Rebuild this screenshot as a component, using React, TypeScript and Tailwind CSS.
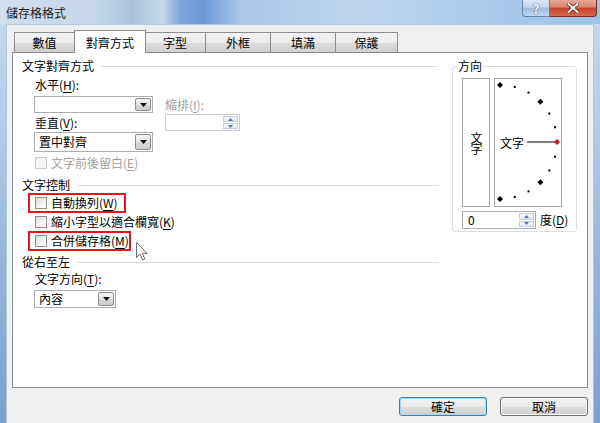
import React from 'react'

function DropBtn() {
    return (
        <div className="w-[16px] m-px border border-[#8d8d8d] rounded-[2px] bg-[linear-gradient(#f4f4f4,#e6e6e6_50%,#d6d6d6_51%,#cfcfcf)] flex items-center justify-center">
            <svg width="7" height="4" viewBox="0 0 7 4">
                <path d="M0 0h7L3.5 4z" fill="#111" />
            </svg>
        </div>
    )
}

function Select({ className, value }: { className: string; value?: string }) {
    return (
        <div className={`flex border border-[#abadb3] bg-white ${className}`}>
            <div className="flex-1 pl-[4px] flex items-center">{value}</div>
            <DropBtn />
        </div>
    )
}

function Spin({ className, value, disabled }: { className: string; value?: string; disabled?: boolean }) {
    return (
        <div className={`flex border bg-white ${disabled ? 'border-[#c9ccd3]' : 'border-[#abadb3]'} ${className}`}>
            <div className="flex-1 pl-[5px] flex items-center">{value}</div>
            <div className="w-[15px] m-px flex flex-col gap-px">
                <div className="flex-1 border border-[#c8cfda] bg-[linear-gradient(#f7f9fc,#e3e9f1)] flex items-center justify-center">
                    <svg width="5" height="3" viewBox="0 0 5 3">
                        <path d="M0 3h5L2.5 0z" fill="#4f78b8" />
                    </svg>
                </div>
                <div className="flex-1 border border-[#c8cfda] bg-[linear-gradient(#f7f9fc,#e3e9f1)] flex items-center justify-center">
                    <svg width="5" height="3" viewBox="0 0 5 3">
                        <path d="M0 0h5L2.5 3z" fill="#4f78b8" />
                    </svg>
                </div>
            </div>
        </div>
    )
}

function Check({ disabled }: { disabled?: boolean }) {
    return (
        <span
            className={`w-[12px] h-[12px] shrink-0 border ${
                disabled
                    ? 'border-[#c9c9c9] bg-[#f4f4f4]'
                    : 'border-[#8e8f8f] bg-[linear-gradient(135deg,#d8d8d8,#f4f4f4_60%,#ffffff)]'
            }`}
        />
    )
}

function Header({ text, className }: { text: string; className: string }) {
    return (
        <div className={`flex items-center gap-[7px] h-[14px] ${className}`}>
            <span>{text}</span>
            <div className="flex-1 h-px bg-[#d5dfe5]" />
        </div>
    )
}

function U({ c }: { c: string }) {
    return <span className="underline underline-offset-2">{c}</span>
}

function Dial() {
    // semicircle of dots, center at left edge of the box
    const cx = 5
    const cy = 63
    const r = 57
    const dots = []
    for (let a = 90; a >= -90; a -= 15) {
        const rad = (a * Math.PI) / 180
        const x = cx + r * Math.cos(rad)
        const y = cy - r * Math.sin(rad)
        if (a === 0) {
            dots.push(<path key={a} d={`M${x} ${y - 3}l3 3l-3 3l-3-3z`} fill="#d01010" />)
        } else if (a % 45 === 0) {
            dots.push(<path key={a} d={`M${x} ${y - 3}l3 3l-3 3l-3-3z`} fill="#000" />)
        } else {
            dots.push(<rect key={a} x={x - 1} y={y - 1} width="2" height="2" fill="#000" />)
        }
    }
    return (
        <svg className="absolute inset-0" width="66" height="127" viewBox="0 0 66 127">
            <line x1="32" y1="63" x2="61" y2="63" stroke="#000" strokeWidth="1" />
            {dots}
        </svg>
    )
}

export default function App() {
    const tabs = ['數值', '對齊方式', '字型', '外框', '填滿', '保護']
    const widths = ['w-[61px]', 'w-[72px]', 'w-[61px]', 'w-[65px]', 'w-[65px]', 'w-[62px]']

    return (
        <div className="w-[600px] h-[423px] relative overflow-hidden flex flex-col bg-[linear-gradient(180deg,#cddcec,#a8c4e4_40%,#86aad6_80%,#7aa0d0)] font-['Noto_Sans_CJK_TC',sans-serif] text-[12px] leading-[14px] text-black">
            {/* Title bar */}
            <div className="h-[24px] flex items-start bg-[linear-gradient(90deg,#d2dfec_0%,#c6d7e9_16%,#a9c2df_22%,#c7d9ec_27%,#7da6d9_30%,#6c9ad6_34%,#a9c7ea_40%,#bcd5ee_60%,#a9cbec_80%,#9cc2e8_100%)]">
                <div className="pl-[6px] pt-[6px] text-[#1a1a1a]">儲存格格式</div>
                <div className="ml-auto mr-[3px] flex">
                    <div className="w-[28px] h-[17px] border border-t-0 border-[#6282a8] rounded-bl-[4px] bg-[linear-gradient(#dbe7f4,#c2d6ec_45%,#9fbde0_50%,#bcd6f0)] flex items-center justify-center">
                        <span className="text-[13px] leading-[13px] font-bold text-white [text-shadow:0_0_1px_#2a4a70,0_0_1px_#2a4a70]">?</span>
                    </div>
                    <div className="w-[47px] h-[17px] border border-t-0 border-l-0 border-[#7a2a20] rounded-br-[4px] bg-[linear-gradient(#e9a898,#d98471_45%,#c5432b_50%,#d46a4c)] flex items-center justify-center">
                        <svg width="12" height="10" viewBox="0 0 12 10">
                            <path d="M1.5 1l9 8M10.5 1l-9 8" stroke="#5a1a12" strokeWidth="3.6" strokeLinecap="square" />
                            <path d="M1.5 1l9 8M10.5 1l-9 8" stroke="#fff" strokeWidth="2" strokeLinecap="square" />
                        </svg>
                    </div>
                </div>
            </div>

            {/* Dialog body */}
            <div className="flex-1 mx-[6px] bg-[#f0f0f0] border-l border-t border-r border-[#b4c8de] px-[5px] pt-[5px] flex flex-col">
                {/* Tabs */}
                <div className="flex items-end pl-[2px] h-[22px]">
                    {tabs.map((t, i) =>
                        i === 1 ? (
                            <div
                                key={t}
                                className={`${widths[i]} h-[23px] -mb-px relative z-10 bg-white border border-b-0 border-[#898c95] -ml-px flex items-center justify-center pt-[1px]`}
                            >
                                {t}
                            </div>
                        ) : (
                            <div
                                key={t}
                                className={`${widths[i]} h-[20px] border-t border-r border-[#898c95] ${i === 0 ? 'border-l' : ''} ${i === 2 ? '-ml-px' : ''} bg-[linear-gradient(#f3f3f3,#ebebeb_50%,#dddddd_51%,#cfcfcf)] flex items-center justify-center`}
                            >
                                {t}
                            </div>
                        )
                    )}
                </div>

                {/* Panel */}
                <div className="h-[336px] border border-[#898c95] bg-white flex">
                    {/* Left column */}
                    <div className="w-[427px] pl-[9px] pr-[2px] pt-[6px] flex flex-col">
                        <Header text="文字對齊方式" className="" />
                        <div className="flex ml-[12px] mt-[5px]">
                            <div className="w-[119px] flex flex-col">
                                <div className="pl-[1px] h-[14px]">
                                    水平(<U c="H" />):
                                </div>
                                <Select className="mt-[4px] h-[17px] w-[119px]" />
                                <div className="pl-[1px] mt-[3px] h-[14px]">
                                    垂直(<U c="V" />):
                                </div>
                                <Select className="mt-[2px] h-[20px] w-[119px]" value="置中對齊" />
                            </div>
                            <div className="ml-[12px] pt-[20px] flex flex-col">
                                <div className="h-[14px] text-[#a0a0a0]">
                                    縮排(<U c="I" />):
                                </div>
                                <Spin className="mt-[2px] w-[75px] h-[17px]" disabled />
                            </div>
                        </div>
                        <div className="ml-[13px] mt-[4px] h-[14px] flex items-center gap-[4px] text-[#a0a0a0]">
                            <Check disabled />
                            <span>
                                文字前後留白(<U c="E" />)
                            </span>
                        </div>

                        <Header text="文字控制" className="mt-[8px]" />
                        <div className="ml-[6px] mt-[1px] flex flex-col">
                            <div className="w-[98px] h-[20px] border-2 border-[#e8141b] pl-[5px] flex items-center gap-[4px]">
                                <Check />
                                <span>
                                    自動換列(<U c="W" />)
                                </span>
                            </div>
                            <div className="h-[18px] border-2 border-transparent pl-[5px] flex items-center gap-[4px]">
                                <Check />
                                <span>
                                    縮小字型以適合欄寬(<U c="K" />)
                                </span>
                            </div>
                            <div className="w-[103px] h-[20px] border-2 border-[#e8141b] pl-[5px] flex items-center gap-[4px]">
                                <Check />
                                <span>
                                    合併儲存格(<U c="M" />)
                                </span>
                            </div>
                        </div>

                        <Header text="從右至左" className="mt-[4px]" />
                        <div className="ml-[13px] mt-[3px] h-[14px]">
                            文字方向(<U c="T" />):
                        </div>
                        <Select className="ml-[12px] mt-[4px] w-[82px] h-[18px]" value="內容" />
                    </div>

                    {/* Orientation group */}
                    <fieldset className="ml-[12px] mt-[6px] w-[125px] h-[173px] border border-[#d5dfe5] rounded-[3px]">
                        <legend className="ml-[4px] px-[1px] leading-[14px]">方向</legend>
                        <div className="flex gap-[4px] pl-[9px] mt-[5px]">
                            <div className="w-[28px] h-[129px] border border-[#a5a5a5] flex items-center justify-center">
                                <span className="[writing-mode:vertical-rl] leading-[14px] tracking-[-1px]">文字</span>
                            </div>
                            <div className="w-[68px] h-[129px] border border-[#a5a5a5] relative flex items-center pl-[5px]">
                                <Dial />
                                <span className="relative">文字</span>
                            </div>
                        </div>
                        <div className="flex items-center pl-[9px] mt-[4px]">
                            <Spin className="w-[74px] h-[18px]" value="0" />
                            <span className="ml-[4px]">
                                度(<U c="D" />)
                            </span>
                        </div>
                    </fieldset>
                </div>

                {/* Buttons */}
                <div className="flex justify-end gap-[13px] mt-[9px]">
                    <button className="w-[88px] h-[19px] rounded-[3px] border border-[#3c7fb1] shadow-[inset_0_0_0_1px_#9fdcf7] bg-[linear-gradient(#f2f2f2,#ebebeb_50%,#dddddd_51%,#cfcfcf)] flex items-center justify-center">
                        確定
                    </button>
                    <button className="w-[88px] h-[19px] rounded-[3px] border border-[#707070] shadow-[inset_0_0_0_1px_#fcfcfc] bg-[linear-gradient(#f2f2f2,#ebebeb_50%,#dddddd_51%,#cfcfcf)] flex items-center justify-center">
                        取消
                    </button>
                </div>
            </div>

            {/* Mouse pointer */}
            <svg className="absolute left-[136px] top-[242px]" width="13" height="19" viewBox="0 0 13 19">
                <path
                    d="M0.5 0.5V15.5L4 12.2L6.6 18L8.8 17L6.3 11.4H11Z"
                    fill="#fff"
                    stroke="#6b6b6b"
                    strokeWidth="1"
                    strokeLinejoin="round"
                />
            </svg>
        </div>
    )
}
